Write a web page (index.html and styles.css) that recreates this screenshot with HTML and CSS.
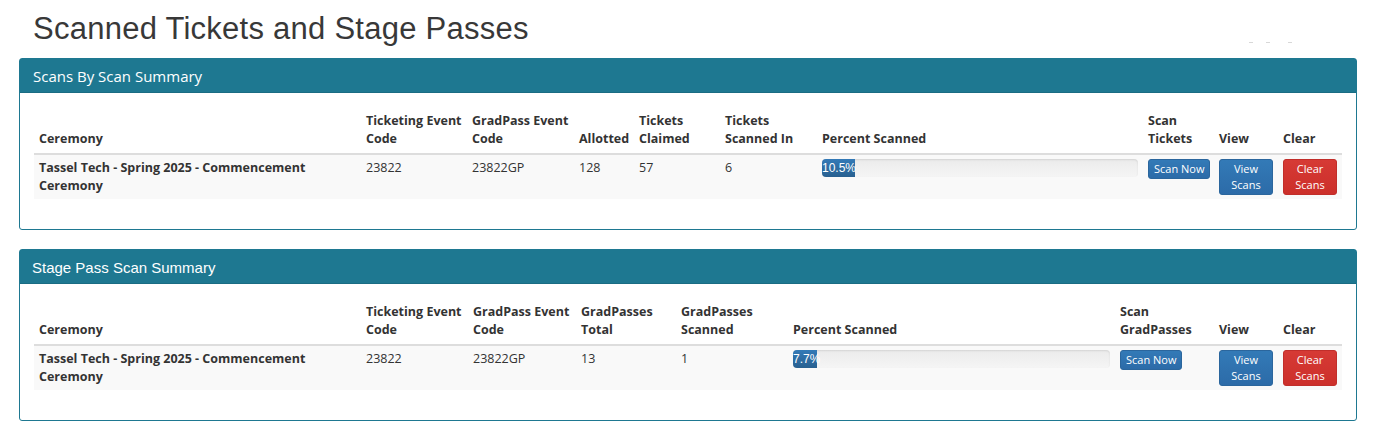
FILE: index.html
```html
<!DOCTYPE html>
<html lang="en">
<head>
<meta charset="utf-8">
<title>Scanned Tickets and Stage Passes</title>
<link rel="stylesheet" href="styles.css">
</head>
<body>
<div class="page">
  <div class="title-row">
    <h1 class="page-title">Scanned Tickets and Stage Passes</h1>
    <div class="dots"><span></span><span></span><span></span></div>
  </div>

  <div class="panel">
    <div class="panel-heading heading-sans">Scans By Scan Summary</div>
    <div class="panel-body">
      <table class="scan-table">
        <colgroup>
          <col class="w327"><col class="w106"><col class="w107"><col class="w60"><col class="w86"><col class="w97"><col class="w326"><col class="w71"><col class="w64"><col class="w64">
        </colgroup>
        <thead>
          <tr>
            <th>Ceremony</th>
            <th>Ticketing Event Code</th>
            <th>GradPass Event Code</th>
            <th>Allotted</th>
            <th>Tickets Claimed</th>
            <th>Tickets Scanned In</th>
            <th>Percent Scanned</th>
            <th>Scan Tickets</th>
            <th>View</th>
            <th>Clear</th>
          </tr>
        </thead>
        <tbody>
          <tr>
            <td class="name">Tassel Tech - Spring 2025 - Commencement Ceremony</td>
            <td>23822</td>
            <td>23822GP</td>
            <td>128</td>
            <td>57</td>
            <td>6</td>
            <td><div class="progress"><div class="progress-bar" style="width:10.5%">10.5%</div></div></td>
            <td><a class="btn btn-blue nowrap">Scan Now</a></td>
            <td><a class="btn btn-blue">View Scans</a></td>
            <td><a class="btn btn-red">Clear Scans</a></td>
          </tr>
        </tbody>
      </table>
    </div>
  </div>

  <div class="panel">
    <div class="panel-heading heading-arial">Stage Pass Scan Summary</div>
    <div class="panel-body">
      <table class="scan-table">
        <colgroup>
          <col class="w327"><col class="w107"><col class="w108"><col class="w100"><col class="w112"><col class="w327"><col class="w99"><col class="w64"><col class="w64">
        </colgroup>
        <thead>
          <tr>
            <th>Ceremony</th>
            <th>Ticketing Event Code</th>
            <th>GradPass Event Code</th>
            <th>GradPasses Total</th>
            <th>GradPasses Scanned</th>
            <th>Percent Scanned</th>
            <th>Scan GradPasses</th>
            <th>View</th>
            <th>Clear</th>
          </tr>
        </thead>
        <tbody>
          <tr>
            <td class="name">Tassel Tech - Spring 2025 - Commencement Ceremony</td>
            <td>23822</td>
            <td>23822GP</td>
            <td>13</td>
            <td>1</td>
            <td><div class="progress"><div class="progress-bar" style="width:7.7%">7.7%</div></div></td>
            <td><a class="btn btn-blue nowrap">Scan Now</a></td>
            <td><a class="btn btn-blue">View Scans</a></td>
            <td><a class="btn btn-red">Clear Scans</a></td>
          </tr>
        </tbody>
      </table>
    </div>
  </div>
</div>
</body>
</html>
```

FILE: styles.css
```css
* { box-sizing: border-box; }

html, body {
  margin: 0;
  padding: 0;
  background: #fff;
}

body {
  font-family: "Open Sans", "DejaVu Sans", sans-serif;
  font-size: 12.5px;
  line-height: 18px;
  color: #333;
}

.page {
  padding: 0 18px 0 19px;
}

.title-row {
  display: flex;
  align-items: flex-end;
  padding-top: 12px;
  margin-bottom: 13px;
}

.page-title {
  margin: 0 0 0 14px;
  font-family: "Liberation Sans", Arial, sans-serif;
  font-weight: normal;
  font-size: 31px;
  line-height: 33px;
  letter-spacing: 0.25px;
  color: #383838;
}

.dots {
  margin-left: auto;
  margin-right: 65px;
  margin-bottom: 2px;
  display: flex;
  gap: 13px;
}

.dots span {
  display: block;
  width: 4px;
  height: 1px;
  background: #d8d8d8;
}

.dots span:last-child {
  margin-left: 5px;
}

.panel {
  border: 1px solid #1e7891;
  border-radius: 3px;
  margin-bottom: 19px;
  background: #fff;
}

.panel-heading {
  background: #1e7891;
  color: #fff;
  height: 34px;
  border-bottom: 1px solid #1a6c83;
}

.heading-sans {
  font-family: "Open Sans", sans-serif;
  font-size: 15px;
  line-height: 20px;
  padding: 7px 13px;
}

.heading-arial {
  font-family: "Liberation Sans", Arial, sans-serif;
  font-size: 15px;
  line-height: 20px;
  padding: 8px 12px 6px;
}

.panel-body {
  padding: 14px 14px 10px;
}

.scan-table {
  width: 100%;
  table-layout: fixed;
  border-collapse: collapse;
  border-spacing: 0;
  margin-bottom: 20px;
}

.w60 { width: 60px; }
.w64 { width: 64px; }
.w71 { width: 71px; }
.w86 { width: 86px; }
.w97 { width: 97px; }
.w99 { width: 99px; }
.w100 { width: 100px; }
.w106 { width: 106px; }
.w107 { width: 107px; }
.w108 { width: 108px; }
.w112 { width: 112px; }
.w326 { width: 326px; }
.w327 { width: 327px; }

.scan-table th {
  text-align: left;
  vertical-align: bottom;
  font-weight: bold;
  padding: 5px 5px;
  border-bottom: 2px solid #dddddd;
}

.scan-table td {
  vertical-align: top;
  padding: 4px 5px;
}

.scan-table tbody tr {
  background: #f9f9f9;
}

.scan-table td.name {
  font-weight: bold;
}

.progress {
  height: 18px;
  border-radius: 4px;
  overflow: hidden;
  background: linear-gradient(to bottom, #ebebeb 0, #f5f5f5 100%);
  box-shadow: inset 0 1px 2px rgba(0, 0, 0, 0.1);
}

.progress-bar {
  height: 100%;
  background: linear-gradient(to bottom, #337ab7 0, #286090 100%);
  color: #fff;
  font-family: "Liberation Sans", Arial, sans-serif;
  font-size: 12px;
  line-height: 18px;
  text-align: center;
  white-space: nowrap;
}

.btn {
  display: inline-block;
  padding: 1px 5px;
  font-family: "Open Sans", sans-serif;
  font-size: 11px;
  line-height: 16px;
  text-align: center;
  color: #fff;
  border: 1px solid transparent;
  border-radius: 3px;
  text-decoration: none;
  cursor: pointer;
}

.nowrap {
  white-space: nowrap;
}

.btn-blue {
  background: linear-gradient(to bottom, #337ab7 0, #2c6ba8 100%);
  border-color: #2b669d;
}

.btn-red {
  background: linear-gradient(to bottom, #d63a35 0, #cc2f2a 100%);
  border-color: #c12e2a;
}
```
